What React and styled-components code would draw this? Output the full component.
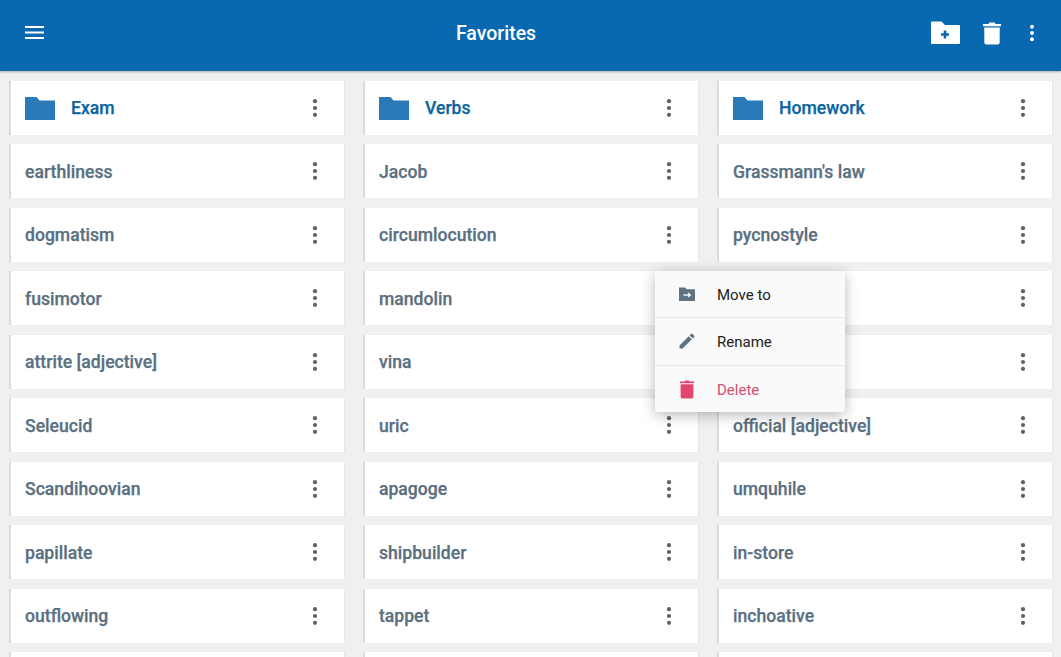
import React from 'react';
import styled, { createGlobalStyle } from 'styled-components';

const Global = createGlobalStyle`
  html, body { margin: 0; padding: 0; height: 100%; overflow: hidden; background: #f0f0f0; }
  * { box-sizing: border-box; }
`;

const Screen = styled.div`
  position: relative;
  width: 1061px;
  height: 657px;
  overflow: hidden;
  background: #f0f0f0;
  font-family: Roboto, "Liberation Sans", sans-serif;
`;

const AppBar = styled.header`
  height: 71px;
  background: #0868b0;
  box-shadow: 0 1px 2px rgba(0, 0, 0, 0.28);
  display: flex;
  align-items: center;
  padding: 0 18px 6px 25px;
  color: #fff;
`;

const Title = styled.h1`
  flex: 1;
  margin: 3px 0 0;
  padding-left: 17px;
  text-align: center;
  font-size: 19.5px;
  line-height: 24px;
  font-weight: 500;
`;

const BarActions = styled.div`
  display: flex;
  align-items: center;
`;

const NewFolderIcon = styled.svg`
  width: 30px;
  height: 24px;
  margin-right: 22px;
`;

const TrashIcon = styled.svg`
  width: 20px;
  height: 24px;
  margin-right: 19px;
`;

const Grid = styled.main`
  display: grid;
  grid-template-columns: repeat(3, 335.5px);
  grid-auto-rows: 54px;
  column-gap: 18.5px;
  row-gap: 9.5px;
  padding: 9.7px 0 0 8.5px;
`;

const Card = styled.div`
  display: flex;
  align-items: center;
  background: #fff;
  border-left: 2px solid #dcdcdc;
  padding: 0 17px 0 14.5px;
  box-shadow: 1px 0 1px rgba(0, 0, 0, 0.04);
`;

const Label = styled.span`
  flex: 1;
  font-size: 17.6px;
  font-weight: 500;
  color: ${(p) => (p.$folder ? '#0a659f' : '#5a6f7f')};
  padding-left: ${(p) => (p.$folder ? '16px' : '0')};
  padding-top: 1px;
  white-space: nowrap;
  -webkit-text-stroke: 0.25px currentColor;
`;

const Menu = styled.div`
  position: absolute;
  left: 655px;
  top: 271px;
  width: 190px;
  height: 141px;
  background: #fafafa;
  border-radius: 2px;
  box-shadow: 0 3px 14px rgba(0, 0, 0, 0.28);
  display: flex;
  flex-direction: column;
`;

const MenuRow = styled.div`
  flex: 1;
  display: flex;
  align-items: center;
  gap: 20px;
  padding: 2px 0 0 22px;
  font-size: 15px;
  color: ${(p) => (p.$danger ? '#d2506f' : '#212121')};
  & + & { border-top: 1px solid #e8e8e8; }
`;

const MenuIcon = styled.svg`
  width: 20px;
  height: 20px;
  flex: none;
  margin-top: -2px;
`;

const Dots = ({ color = '#616161', size = 24 }) => (
  <svg width={size} height={size} viewBox="0 0 24 24" fill={color} style={{ flex: 'none' }}>
    <circle cx="12" cy="5.2" r="2.1" />
    <circle cx="12" cy="12" r="2.1" />
    <circle cx="12" cy="18.8" r="2.1" />
  </svg>
);

const Folder = () => (
  <svg width="30" height="24" viewBox="0 0 30 24" style={{ flex: 'none' }}>
    <path d="M0 1h11.5l3 3.5H30V24H0z" fill="#2a7ab9" />
  </svg>
);

const columns = [
  ['earthliness', 'dogmatism', 'fusimotor', 'attrite [adjective]', 'Seleucid', 'Scandihoovian', 'papillate', 'outflowing', ''],
  ['Jacob', 'circumlocution', 'mandolin', 'vina', 'uric', 'apagoge', 'shipbuilder', 'tappet', ''],
  ["Grassmann's law", 'pycnostyle', '', '', 'official [adjective]', 'umquhile', 'in-store', 'inchoative', ''],
];
const folders = ['Exam', 'Verbs', 'Homework'];

export default function App() {
  return (
    <Screen>
      <Global />
      <AppBar>
        <svg width="20" height="14" viewBox="0 0 20 14" fill="#fff" style={{ flex: 'none' }}>
          <rect x="0" y="0" width="19" height="2" />
          <rect x="0" y="5.5" width="19" height="2" />
          <rect x="0" y="11" width="19" height="2" />
        </svg>
        <Title>Favorites</Title>
        <BarActions>
          <NewFolderIcon viewBox="0 0 30 24">
            <path d="M1 1.5a1 1 0 0 1 1-1h9.5l3.5 3.5h14a1 1 0 0 1 1 1V22a1 1 0 0 1-1 1H2a1 1 0 0 1-1-1z" fill="#fff" />
            <path d="M13.7 9.5h2.6v2.7H19v2.6h-2.7v2.7h-2.6v-2.7H11v-2.6h2.7z" fill="#0868b0" />
          </NewFolderIcon>
          <TrashIcon viewBox="0 0 20 24" fill="#fff">
            <path d="M1 3h5.5l1-1.5h5l1 1.5H19v2.2H1z" />
            <path d="M2.3 6.5h15.4V21a2.5 2.5 0 0 1-2.5 2.5H4.8A2.5 2.5 0 0 1 2.3 21z" />
          </TrashIcon>
          <Dots color="#fff" size={22} />
        </BarActions>
      </AppBar>
      <Grid>
        {folders.map((f) => (
          <Card key={f}>
            <Folder />
            <Label $folder>{f}</Label>
            <Dots />
          </Card>
        ))}
        {columns[0].map((_, r) =>
          columns.map((col, c) => (
            <Card key={`${r}-${c}`}>
              <Label>{col[r]}</Label>
              <Dots />
            </Card>
          ))
        )}
      </Grid>
      <Menu>
        <MenuRow>
          <MenuIcon viewBox="0 0 20 20">
            <path d="M2 3.5h6l1.7 1.8H18V17H2z" fill="#5f7382" />
            <path d="M6.5 10.2h4.6V8.2l3.2 2.8-3.2 2.8v-2H6.5z" fill="#fafafa" />
          </MenuIcon>
          Move to
        </MenuRow>
        <MenuRow>
          <MenuIcon viewBox="0 0 24 24">
            <path d="M3 17.25V21h3.75L17.81 9.94l-3.75-3.75L3 17.25zM20.71 7.04a1 1 0 0 0 0-1.41l-2.34-2.34a1 1 0 0 0-1.41 0l-1.83 1.83 3.75 3.75 1.83-1.83z" fill="#5f7382" />
          </MenuIcon>
          Rename
        </MenuRow>
        <MenuRow $danger>
          <MenuIcon viewBox="0 0 20 20" fill="#e0476b">
            <path d="M3 2.4h4.5l.8-1h3.4l.8 1H17v1.8H3z" />
            <path d="M3.6 5.2h12.8v12.6a1.8 1.8 0 0 1-1.8 1.8H5.4a1.8 1.8 0 0 1-1.8-1.8z" />
          </MenuIcon>
          Delete
        </MenuRow>
      </Menu>
    </Screen>
  );
}
